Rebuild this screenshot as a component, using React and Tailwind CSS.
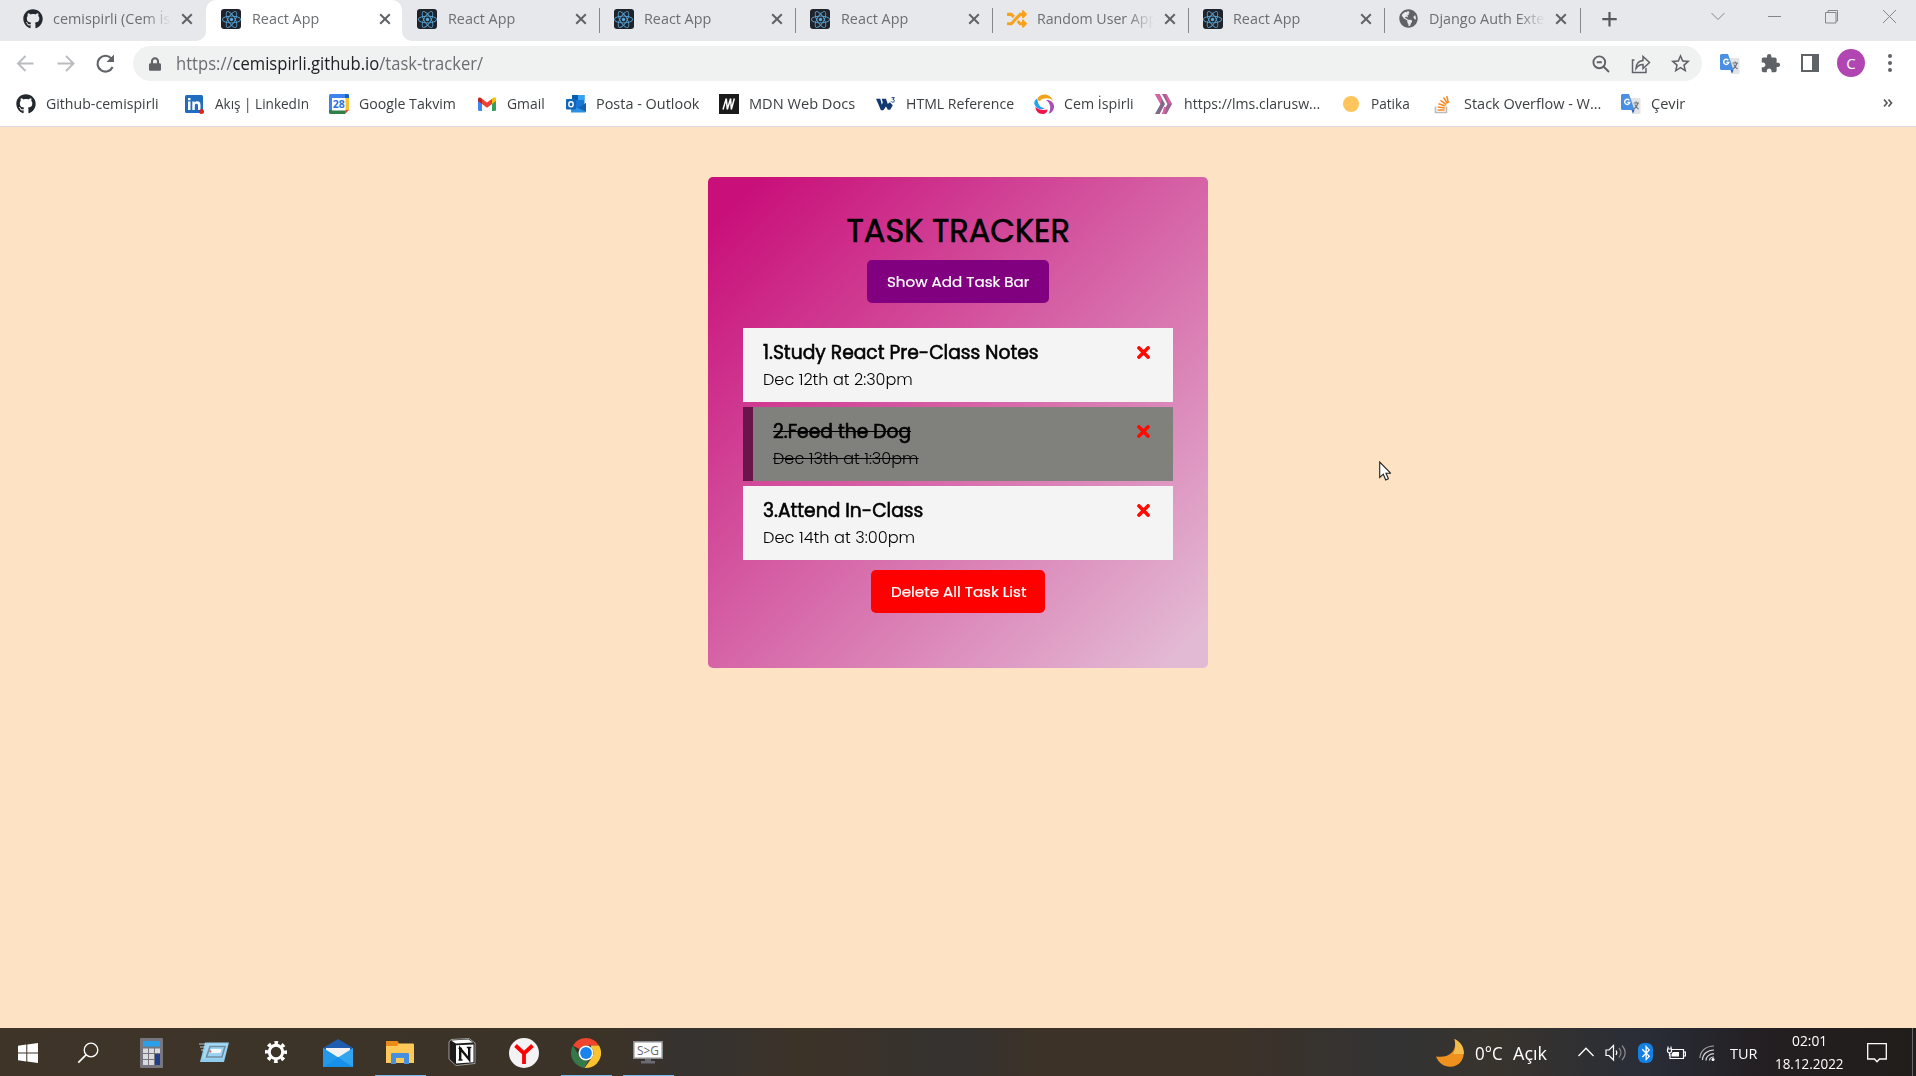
import { useLayoutEffect, useRef } from "react";
import { FaGithub, FaReact, FaRandom, FaTimes, FaLock, FaBluetoothB, FaGlobeAmericas } from "react-icons/fa";
import { MdExtension, MdStarBorder } from "react-icons/md";

/* One line of text, condensed or stretched to a given width. */
function Line({ w, className = "", children }) {
  const ref = useRef(null);
  useLayoutEffect(() => {
    const el = ref.current;
    el.style.transform = `scaleX(${w / el.offsetWidth})`;
  }, [w]);
  return (
    <span className={`block shrink-0 ${className}`} style={{ width: w }}>
      <span ref={ref} className="inline-block origin-left whitespace-nowrap align-top">{children}</span>
    </span>
  );
}

const ReactIcon = () => (
  <span className="flex h-5 w-5 items-center justify-center rounded-[3px] bg-[#20232a]">
    <FaReact className="h-[19px] w-[19px] text-[#5aa9dc]" />
  </span>
);

const Translate = () => (
  <svg viewBox="0 0 20 20" className="h-5 w-5">
    <path d="M8 4h10.500a1 1 0 0 1 1 1v14a1 1 0 0 1-1 1H13z" fill="#e3e4e6" />
    <path d="M1.500 0H8l5.500 16H1.500A1.500 1.500 0 0 1 0 14.500v-13A1.500 1.500 0 0 1 1.500 0z" fill="#4a90e2" />
    <path d="M10.500 16h3L12 20z" fill="#2f63b0" />
    <path d="M8.300 6.200a2.600 2.600 0 1 0 .5 2.200H6.400" fill="none" stroke="#fff" strokeWidth="1.400" />
    <path d="M12.500 9h5.500M15.200 7.500V9M17 9c-.6 2.500-2 4.500-4 6M13.800 10.500c.8 2 2.100 3.400 3.700 4.500" fill="none" stroke="#6b7077" strokeWidth="1.100" />
  </svg>
);

const LinkedIn = () => (
  <svg viewBox="0 0 20 20" className="h-5 w-5">
    <rect width="18" height="18" y="1" rx="1.500" fill="#1f6cc0" />
    <path d="M3 7.500h2.500V16H3zM3 4h2.500v2.200H3zM7.300 7.500h2.400v1.200c1.400-2.200 5.800-1.800 5.800 2V16H13v-4.500c0-2.400-3.200-2.300-3.200 0V16H7.300z" fill="#fff" />
    <circle cx="16.500" cy="17.500" r="2.500" fill="#e8201c" />
  </svg>
);

const Calendar = () => (
  <svg viewBox="0 0 20 20" className="h-5 w-5">
    <path d="M1.500 0h17A1.500 1.500 0 0 1 20 1.500V4H0V1.500A1.500 1.500 0 0 1 1.500 0z" fill="#3f83ef" />
    <path d="M0 4h3v12H0z" fill="#3f83ef" />
    <path d="M16 4h4v12h-4z" fill="#fbc02d" />
    <path d="M16 0h2.500A1.500 1.500 0 0 1 20 1.500V4h-4z" fill="#1c60c9" />
    <path d="M0 16h16v4H1.500A1.500 1.500 0 0 1 0 18.500z" fill="#2f7f46" />
    <path d="M16 16h4l-4 4z" fill="#e94435" />
    <path d="M3 4h13.500v12.500H3z" fill="#fff" />
    <text x="9.800" y="14" textAnchor="middle" fontSize="10.500" fontWeight="700" fontFamily="Open Sans" fill="#2f74d8">28</text>
  </svg>
);

const Gmail = () => (
  <svg viewBox="0 0 20 20" className="h-5 w-5">
    <path d="M1 6v9.500A1.500 1.500 0 0 0 2.500 17H5V8z" fill="#4285f4" />
    <path d="M19 6v9.500a1.500 1.500 0 0 1-1.500 1.500H15V8z" fill="#34a05a" />
    <path d="M15 4.800 16.300 3.700C17.500 2.900 19 3.700 19 5v2l-4 3z" fill="#fbbc04" />
    <path d="M5 4.800 10 8.500l5-3.700V10l-5 3.800L5 10z" fill="#ea4335" />
    <path d="M1 7V5c0-1.300 1.500-2.100 2.700-1.300L5 4.800V10z" fill="#c5221f" />
  </svg>
);

const Outlook = () => (
  <svg viewBox="0 0 20 20" className="h-5 w-5">
    <path d="M6 1h12.500v14H6z" fill="#1976d2" />
    <path d="M6 1h6v5H6z" fill="#0a5cad" />
    <path d="M12 1h6.500v5H12z" fill="#36a3ee" />
    <path d="M5 18.500V10l7 4.500L20 9v8.500a1 1 0 0 1-1 1z" fill="#2b91e3" />
    <path d="m12 14 8-5v8.500z" fill="#1461b0" />
    <rect y="5" width="10" height="10.500" rx="1" fill="#0f66bb" />
    <ellipse cx="5" cy="10.300" rx="2.200" ry="2.600" fill="none" stroke="#fff" strokeWidth="1.400" />
  </svg>
);

const Mdn = () => (
  <svg viewBox="0 0 20 20" className="h-5 w-5">
    <path d="M0 0h20v20H0z" fill="#1b1b1b" />
    <path d="m4 15.500 3.300-11M8.300 15.500l3.300-11M12.300 15.500l3-11M7.300 4.500l1 11M11.600 4.500l.7 11" stroke="#fff" strokeWidth="1.500" />
  </svg>
);

const W3 = () => (
  <svg viewBox="0 0 20 20" className="h-5 w-5">
    <path d="M0 4.800h4.300l1.500 6 1-2.400-1.100-3.600H10l1.800 5.200 2-1.700 3 3-2.600 4.500h-2.300L10 12.500l-2.600 3.800H4.900z" fill="#123a70" />
    <path d="M15.500 3.700h2.900l-1.500 1.700c2 0 2 2.800-.2 2.800-.8 0-1.200-.3-1.500-.8" fill="none" stroke="#123a70" strokeWidth="1" />
  </svg>
);

const Swirl = () => (
  <svg viewBox="0 0 20 20" className="h-5 w-5">
    <path d="M4 3.500C8-1.500 17-.5 19 7c-2-2.500-5-3-8.500-2.500-2 .300-3.500 1-4.500 2.500-2 0-3-1.500-2-3.500z" fill="#f4a11c" />
    <path d="M3 4.500C4 7 3.500 9 5.500 11.500 7 13.500 9 14 11 14.500c-4 2-9 0-10.500-4C-.3 8 .8 6 3 4.500z" fill="#25a3f2" />
    <path d="M1.500 13c3 2.500 7 3.500 12 2.500 0 2.500-2 4.500-5 4.500-4.500 0-7-3.500-7-7z" fill="#ef1650" />
    <path d="M12 6c5-.5 8.500 3 8 7.500-.4 3-2.500 5.500-5.500 6.300 1.500-3 2-5.500 1.500-8C15.500 9.500 14.300 7.500 12 6z" fill="#a651b6" />
  </svg>
);

const Chevrons = () => (
  <svg viewBox="0 0 20 20" className="h-5 w-5">
    <path d="M1 0h4.500l5.500 10-5.500 10H1l5.500-10z" fill="#80678b" />
    <path d="M8 0h4.500L18 10l-5.500 10H8l5.500-10z" fill="#9b6291" />
    <path d="M1 0h4.500L8 5 6.500 10zM10 13l2.500 0-2 7H8zM11 0h1.500L18 10h-3z" fill="#dc62a5" />
  </svg>
);

const Stack = () => (
  <svg viewBox="0 0 20 20" className="h-5 w-5" fill="none">
    <path d="M1.500 12.500v6h11v-6" stroke="#bcbbbb" strokeWidth="1.600" />
    <path d="M3.500 16h7.200M3.700 13l7.100.9M4.500 9.700l6.800 2.300M6.500 6.300l5.800 4.300M9.500 3.500l4 6M12.700 2l1.800 7" stroke="#f48a24" strokeWidth="1.500" />
  </svg>
);

const tabs = [
  ["React App", 67, ReactIcon, true],
  ["React App", 67, ReactIcon],
  ["React App", 67, ReactIcon],
  ["React App", 67, ReactIcon],
  ["Random User App", 120, () => <FaRandom className="h-5 w-5 text-[#f6a21e]" />],
  ["React App", 67, ReactIcon],
  ["Django Auth Exte", 115, () => <FaGlobeAmericas className="h-[19px] w-[19px] text-[#5f6368]" />],
];

const bookmarks = [
  ["w-[169px]", "Github-cemispirli", 113, () => <FaGithub className="h-5 w-5 text-[#24292f]" />],
  ["w-[144px]", "Akış | LinkedIn", 94, LinkedIn],
  ["w-[148px]", "Google Takvim", 97, Calendar],
  ["w-[89px]", "Gmail", 38, Gmail],
  ["w-[153px]", "Posta - Outlook", 103, Outlook],
  ["w-[157px]", "MDN Web Docs", 106, Mdn],
  ["w-[158px]", "HTML Reference", 108, W3],
  ["w-[120px]", "Cem İspirli", 70, Swirl],
  ["w-[187px]", "https://lms.clarusw...", 136, Chevrons],
  ["w-[93px]", "Patika", 39, () => <span className="mx-[2px] h-4 w-4 rounded-full bg-[#fdc55c]" />],
  ["w-[187px]", "Stack Overflow - W...", 137, Stack],
  ["w-[233px]", "Çevir", 34, Translate],
];

const Close = () => (
  <svg viewBox="0 0 12 12" className="mx-[3px] my-[2px] h-3 w-3 shrink-0" stroke="#5f6368" strokeWidth="2">
    <path d="M1.200 1.200l9.600 9.600M10.800 1.200l-9.600 9.600" />
  </svg>
);

const fade = "[mask-image:linear-gradient(to_right,black_78%,transparent_101%)]";

function TabStrip() {
  return (
    <div className="flex h-[41px] bg-[#e7e8ec] text-[15px] leading-5 text-[#6b6e72]">
      <div className="flex w-[206px] shrink-0 bg-white">
        <div className="flex h-[41px] w-full items-start rounded-br-[10px] bg-[#e7e8ec] pt-[9px] pl-[23px]">
          <FaGithub className="h-5 w-5 shrink-0 text-[#24292f]" />
          <div className={`-mt-px ml-[10px] w-[117px] ${fade}`}>
            <Line w={117}>cemispirli (Cem İs</Line>
          </div>
          <div className="mt-[2px] ml-[8px]"><Close /></div>
        </div>
      </div>
      {tabs.map(([title, w, Icon, active], i) => (
        <div key={i} className={i === 1 ? "w-[196.4px] shrink-0 bg-white" : "w-[196.4px] shrink-0"}>
          <div
            className={
              "flex h-[41px] items-start pt-[9px] pl-[15px] " +
              (active ? "rounded-t-[10px] bg-white" : i === 1 ? "rounded-bl-[10px] bg-[#e7e8ec]" : "")
            }
          >
            <span className="flex w-5 shrink-0">{Icon()}</span>
            <div className={w > 100 ? `-mt-px ml-[10px] w-[116px] ${fade}` : "-mt-px ml-[10.5px] w-[116px]"}>
              <Line w={w}>{title}</Line>
            </div>
            <div className="mt-[2px] ml-[8px]"><Close /></div>
            {i > 0 && <span className={i === 6 ? "-mt-[1px] ml-[10px] h-[25px] w-px bg-[#85888d]" : "-mt-[1px] -mr-px ml-auto h-[25px] w-px bg-[#85888d]"} />}
          </div>
        </div>
      ))}
      <svg viewBox="0 0 336 41" className="h-[41px] w-[336px] shrink-0" fill="none" stroke="#85868c" strokeWidth="1">
        <path d="M28.500 12v14.500M21.300 19.200h14.400" stroke="#55585c" strokeWidth="2.200" />
        <path d="M130.500 13l6.500 6.500 6.500-6.500M187 16.500h13M244.500 12.500h10.500v10.500h-10.500zM247 12.500v-2h9.500v10.500h-1.500M302 10l13 13M315 10L302 23" />
      </svg>
    </div>
  );
}

function AddressBar() {
  return (
    <div className="flex h-[45px] items-center bg-white">
      <svg viewBox="0 0 133 44" className="h-[44px] w-[133px] shrink-0" fill="none" stroke="#babcbf" strokeWidth="1.900">
        <path d="M33.500 21.500H18.500M25.500 14 18 21.500l7.500 7.500M57.500 21.500h15M66 14l7.500 7.500L66 29" />
        <path d="M112.600 25a7.900 7.900 0 1 1-1.500-8.800" stroke="#5f6368" strokeWidth="2.100" />
        <path d="M114 12.500v7.500h-7.500z" fill="#5f6368" stroke="none" />
      </svg>
      <div className="flex h-[35px] w-[1569px] shrink-0 items-center rounded-full bg-[#f0f2f2] pl-[16px] text-[#5f6368]">
        <FaLock className="h-[14px] w-[12px]" />
        <Line w={307} className="-mt-[2px] ml-[15px] text-[17.5px] leading-6 text-[#6a6e73]">
          https://<span className="text-[#202124]">cemispirli.github.io</span>/task-tracker/
        </Line>
        <span className="flex-1" />
        <svg viewBox="0 0 18 18" className="mr-[2px] h-[18px] w-[18px]" fill="none" stroke="currentColor" strokeWidth="1.900">
          <circle cx="7.300" cy="7.300" r="5.900" />
          <path d="M11.500 11.500 17 17M4.800 7.300h5" />
        </svg>
        <svg viewBox="0 0 22 22" className="ml-[18px] h-[22px] w-[22px]" fill="none" stroke="currentColor" strokeWidth="1.500">
          <path d="M4.500 7H2.500v12.500h13.500V15" />
          <path d="M6 15.500c.3-5 3-7.600 7-8V3.500l6.500 6-6.500 6v-4c-3-.1-5.200 1.200-7 4z" />
        </svg>
        <MdStarBorder className="mr-[10px] ml-[17px] h-[23px] w-[23px]" />
      </div>
      <div className="ml-[18px] flex shrink-0"><Translate /></div>
      <MdExtension className="ml-[20px] h-[21px] w-[21px] text-[#5f6368]" />
      <div className="-mt-px ml-[20px] h-[18px] w-[18px] border-[2.500px] border-r-[7px] border-[#5f6368]" />
      <div className="-mt-px ml-[18px] flex h-7 w-7 items-center justify-center rounded-full bg-[#b145b1] text-[15px] leading-none text-white">C</div>
      <div className="-mt-px ml-[23px] flex flex-col gap-[3px]">
        <span className="h-[4px] w-[4px] rounded-full bg-[#5f6368]" />
        <span className="h-[4px] w-[4px] rounded-full bg-[#5f6368]" />
        <span className="h-[4px] w-[4px] rounded-full bg-[#5f6368]" />
      </div>
    </div>
  );
}

function Bookmarks() {
  return (
    <div className="flex h-[41px] border-b border-[#d9dbdd] bg-white pt-[7px] pl-4 text-[15px] leading-5 text-[#3c4043]">
      {bookmarks.map(([cell, label, w, Icon]) => (
        <div key={label} className={`flex h-[22px] shrink-0 items-center ${cell}`}>
          <span className="flex w-5 shrink-0">{Icon()}</span>
          <Line w={w} className="-mt-[2px] ml-[9.500px]">{label}</Line>
        </div>
      ))}
      <svg viewBox="0 0 12 20" className="ml-[29px] h-5 w-3" fill="none" stroke="#55585c" strokeWidth="1.700">
        <path d="m1 6.500 3 3.500-3 3.500M5.500 6.500l3 3.500-3 3.500" />
      </svg>
    </div>
  );
}

const tasks = [
  ["1.Study React Pre-Class Notes", 276, "Dec 12th at 2:30pm", 150, false],
  ["2.Feed the Dog", 138, "Dec 13th at 1:30pm", 146, true],
  ["3.Attend In-Class", 160, "Dec 14th at 3:00pm", 152, false],
];

function Tracker() {
  return (
    <div className="flex h-[491px] w-[500px] flex-col items-center rounded-[5px] bg-[linear-gradient(to_bottom_right,#c90f7a_5%,#e3bad4_96%)] px-[35px] pt-[34px] font-['Poppins','Inter',sans-serif] text-black">
      <Line w={223} className="text-[32px] leading-10 [-webkit-text-stroke:0.6px_black]">TASK TRACKER</Line>
      <button className="mt-[9px] flex h-[43px] w-[182px] items-center justify-center rounded-[5px] bg-[#800080]">
        <Line w={142} className="text-[15px] leading-5 text-white [-webkit-text-stroke:0.2px_white]">Show Add Task Bar</Line>
      </button>
      <div className="mt-[25px] flex w-full flex-col gap-[5px]">
        {tasks.map(([title, tw, date, dw, done]) => (
          <div
            key={title}
            className={
              "flex h-[74px] justify-between pt-[12px] pr-[21px] pl-5 " +
              (done ? "border-l-[10px] border-[#67154b] bg-[#80807d]" : "bg-[#f4f4f4]")
            }
          >
            <div>
              <Line w={tw} className="text-[19.500px] leading-[26px] [-webkit-text-stroke:0.6px_black]">
                <span className={done ? "line-through decoration-1" : ""}>{title}</span>
              </Line>
              <Line w={dw} className="mt-[2px] text-[16px] leading-6 font-light">
                <span className={done ? "line-through decoration-1" : ""}>{date}</span>
              </Line>
            </div>
            <FaTimes className="mt-[3px] h-[19px] w-[17px] text-[#ff0b00]" />
          </div>
        ))}
      </div>
      <button className="mt-[10px] flex h-[43px] w-[174px] items-center justify-center rounded-[5px] bg-[#ff0000]">
        <Line w={135} className="text-[15px] leading-5 text-white [-webkit-text-stroke:0.2px_white]">Delete All Task List</Line>
      </button>
    </div>
  );
}

function TaskbarIcons() {
  return (
    <>
      <svg viewBox="0 0 20 20" className="mt-[2px] ml-[18px] h-5 w-5 shrink-0" fill="#fff">
        <path d="M0 2.800 8.300 1.600v7.900H0zM9.300 1.400 20 0v9.500H9.300zM0 10.500h8.300v8L0 17.300zM9.300 10.500H20V20L9.300 18.600z" />
      </svg>
      <svg viewBox="0 0 22 22" className="mt-[2px] ml-[39px] h-[22px] w-[22px] shrink-0" fill="none" stroke="#fff" strokeWidth="1.300">
        <circle cx="14" cy="8" r="6.800" />
        <path d="M9.300 12.700 1.300 20.700" strokeWidth="1.700" />
      </svg>
      <svg viewBox="0 0 23 30" className="mt-[2px] ml-[41px] h-[30px] w-[23px] shrink-0">
        <rect width="23" height="30" rx="1" fill="#77757e" />
        <path d="M3 3h17v5.500H3z" fill="#2aa0ea" />
        <path d="M3 10.500h5v4.500H3zM9 10.500h5v4.500H9zM15 10.500h5v4.500h-5zM3 16h5v5H3zM9 16h5v5H9zM3 22h5v5H3zM9 22h5v5H9z" fill="#d9dadd" />
        <path d="M15 16h5v11h-5z" fill="#203f87" />
      </svg>
      <svg viewBox="0 0 30 22" className="ml-[36px] h-[22px] w-[30px] shrink-0">
        <path d="M6 1.500h24L25 21H1z" fill="#8fcdf0" />
        <path d="M7.500 2.800h21L24.500 17.500H3.500z" fill="#a8d9f3" />
        <path d="M11 5.500h15l-3 10.500H7.500z" fill="#9bd4f3" stroke="#6d8ea3" strokeWidth="1.600" />
        <path d="M12 8h10.500l-1 4H10.700z" fill="#f2f8fc" />
        <path d="M0 3h7M1 6h5M2 9h3" stroke="#cfeafa" strokeWidth=".8" />
        <circle cx="11.500" cy="10.500" r="1" fill="#d15c4a" />
      </svg>
      <svg viewBox="0 0 24 24" className="ml-[35px] h-6 w-6 shrink-0" fill="none" stroke="#fff">
        <circle cx="12" cy="12" r="6.700" strokeWidth="3" />
        <circle cx="12" cy="12" r="9.300" strokeWidth="3.400" strokeDasharray="3.650 3.650" strokeDashoffset="1.800" />
      </svg>
      <svg viewBox="0 0 30 28" className="mt-[2px] ml-[35px] h-7 w-[30px] shrink-0">
        <path d="M0 9 15 0l15 9v5H0z" fill="#1d5cae" />
        <path d="M3 9h24v9H3z" fill="#f2f2f2" />
        <path d="M0 9l15 9.500L30 9v19H0z" fill="#31a5ee" />
        <path d="M0 28h30L15 18.500z" fill="#1690e8" />
        <path d="M0 9l15 9.500L0 28z" fill="#2499ec" />
      </svg>
      <div className="ml-[22px] flex h-12 w-[51px] shrink-0 flex-col items-center justify-between border-b border-[#76b9ed]">
        <svg viewBox="0 0 28 24" className="mt-[12.500px] mr-[1px] h-6 w-7">
          <path d="M0 1.500C0 .6.500 0 1.500 0H11l2 2.500h13.500c1 0 1.500.5 1.500 1.500V22H0z" fill="#ffc95a" />
          <path d="M0 1.500C0 .6.500 0 1.500 0H11l2 2.500-2 2.500H0z" fill="#ea8b17" />
          <path d="M5 13.500c0-1 .5-1.500 1.500-1.500h15c1 0 1.500.5 1.500 1.500V23h-5v-6h-8v6H5z" fill="#4591e0" />
        </svg>
      </div>
      <svg viewBox="0 0 28 28" className="ml-[22px] h-7 w-7 shrink-0">
        <path d="M1 4 3 1.500 21 .5l6 4.500v20.500L8 27.500 1 21z" fill="#1c1c1c" stroke="#b9bbb8" strokeWidth=".8" />
        <path d="M3 2.500 20.500 1.500l4.500 3L8 5.500z" fill="#fff" />
        <path d="M8 7.300 25.500 6.500v17.800L8 25.500z" fill="#fff" />
        <path d="M12.200 22V10.500l9 11V9.500" fill="none" stroke="#111" strokeWidth="2.400" />
        <path d="M10.500 10.300h3.500M10.500 22h4M18.800 9.500h4.500" stroke="#111" strokeWidth="1.300" />
      </svg>
      <svg viewBox="0 0 30 30" className="mt-[2px] ml-[33px] h-[30px] w-[30px] shrink-0" fill="none">
        <circle cx="15" cy="15" r="15" fill="#f3f3f5" />
        <path d="M6.500 7.500l8.500 8 8.500-8M15 15V26" stroke="#f00" strokeWidth="3.800" />
      </svg>
      <div className="ml-[22px] flex h-12 w-[51px] shrink-0 justify-center border-b border-[#76b9ed]">
        <svg viewBox="0 0 30 30" className="mt-[10px] mr-[1px] h-[30px] w-[30px]">
          <path d="M15 0a15 15 0 0 1 13 7.500H15a7.500 7.500 0 0 0-6.500 3.800L2 7.500A15 15 0 0 1 15 0z" fill="#f0442c" />
          <path d="M28 7.500A15 15 0 0 1 15 30l-1.500-.1 8-11.200A7.500 7.500 0 0 0 20 9.400l0-1.900z" fill="#fbc32f" />
          <path d="M2 7.500 8.500 18.700A7.500 7.500 0 0 0 17.500 22l-4 7.900A15 15 0 0 1 2 7.500z" fill="#35794a" />
          <circle cx="15" cy="15" r="7.500" fill="#fff" />
          <circle cx="15" cy="15" r="5.900" fill="#1a84ee" />
        </svg>
      </div>
      <div className="ml-[11px] flex h-12 w-[51px] shrink-0 justify-center border-b border-[#76b9ed]">
        <svg viewBox="0 0 30 24" className="mt-[13px] mr-[1px] h-6 w-[30px]" fill="none">
          <path d="M12 17h6v3h4v2.500H8V20h4z" fill="#6c6a75" />
          <path d="M.8.800h28.400v16.400H.8z" fill="#fff" stroke="#8b8d8e" strokeWidth="1.500" />
          <text x="15" y="13.500" textAnchor="middle" fontSize="12" fontFamily="Open Sans" textLength="22" lengthAdjust="spacingAndGlyphs" fill="#666">S&gt;G</text>
        </svg>
      </div>
    </>
  );
}

function Tray() {
  return (
    <>
      <svg viewBox="0 0 28 28" className="mt-px h-7 w-7 shrink-0">
        <path d="M18.500 0C31 6.500 30 22 20 26.500 12 30 3 26 0 17.500c13 2 21.500-5 18.500-17.500z" fill="#ef911f" />
        <path d="M18.500 0c7 3.500 9.800 9 9.300 15H17c2.500-3.500 3-9 1.500-15z" fill="#f2bd4b" />
      </svg>
      <Line w={28} className="mt-px ml-[11px] text-[17.500px] leading-6">0°C</Line>
      <Line w={34} className="mt-px ml-[10px] text-[17.500px] leading-6">Açık</Line>
      <svg viewBox="0 0 16 10" className="ml-[31px] h-[10px] w-4" fill="none" stroke="#fff" strokeWidth="1.300"><path d="M.5 9 8 1.300 15.500 9" /></svg>
      <svg viewBox="0 0 21 20" className="mt-[2px] ml-[11px] h-5 w-[21px]" fill="none" stroke="#fff" strokeWidth="1.200">
        <path d="M1 7h3l4.500-4.500v14.500L4 12.500H1z" />
        <path d="M11 7.500c1 1.300 1 3 0 4.500" />
        <path d="M14 5c2.300 2.700 2.300 6.500 0 9.500M17 2.500c4 4.500 4 10 0 14.500" stroke="#888a8e" />
      </svg>
      <span className="mt-[2px] ml-[12px] flex h-5 w-[15px] items-center justify-center rounded-[6px] bg-[#1580e4]"><FaBluetoothB className="h-4 w-[14px]" /></span>
      <svg viewBox="0 0 20 14" className="mt-px ml-[13px] h-[14px] w-5" fill="none" stroke="#fff" strokeWidth="1.200">
        <path d="M6 3.500h11.500v9H4V8M17.500 6H19.400v4h-1.900M1 3h5M1.500 3v2c0 2.500 4 2.500 4 0V3M2 3V.5M5 3V.5M3.500 7v3" />
        <path d="M7 6h6v4.500H5.500V8z" fill="#fff" stroke="none" />
      </svg>
      <svg viewBox="0 0 16 16" className="mt-[2px] ml-[13px] h-4 w-4" fill="none" stroke="#d8d8da" strokeWidth="1.200">
        <path d="M1 13C1 6 7 1 15 1" stroke="#aaa" />
        <path d="M3.500 15c0-6 5-10 11.500-10M7 15.500c0-4 3.500-6.800 8-6.800M10.500 15.500c0-2 2-3.500 4.500-3.500" />
        <circle cx="14" cy="14.500" r="1.500" fill="#fff" stroke="none" />
      </svg>
      <Line w={27} className="mt-px ml-[15px] text-[15px] leading-6">TUR</Line>
      <div className="ml-[17px] flex w-[70px] flex-col items-center text-[15px] leading-[23px]">
        <Line w={35}>02:01</Line>
        <Line w={69}>18.12.2022</Line>
      </div>
      <svg viewBox="0 0 20 20" className="mt-px ml-[23px] h-5 w-5 shrink-0" fill="none" stroke="#fff" strokeWidth="1.300">
        <path d="M.7.700h18.600v15.300h-6.800L10 18.700 7.500 16H.7z" />
      </svg>
      <span className="mr-[3px] ml-[25px] h-12 w-px bg-[#66666a]" />
    </>
  );
}

export default function App() {
  return (
    <div className="flex h-[1076px] w-[1916px] flex-col overflow-hidden bg-[#fee2c4] font-['Open_Sans',sans-serif]">
      <TabStrip />
      <AddressBar />
      <Bookmarks />
      <main className="relative flex flex-1 justify-center pt-[50px]">
        <Tracker />
        <svg viewBox="0 0 12 20" className="absolute top-[334px] left-[1379px] h-5 w-3">
          <path d="M.7 1v15.500l3.600-3.300 2.400 5.800 2.700-1.200L7 12.200h4.600z" fill="#fff" stroke="#222" strokeWidth="1.100" />
        </svg>
      </main>
      <footer className="flex h-12 items-center bg-[linear-gradient(90deg,#3e3428_0%,#3c3328_32%,#353230_36%,#3c3328_42%,#353230_50%,#3c3228_54%,#3c3228_64%,#333334_73%,#38332d_78%,#292d37_86%,#231f22_92%,#211d1a_100%)] text-white">
        <TaskbarIcons />
        <span className="flex-1" />
        <Tray />
      </footer>
    </div>
  );
}
